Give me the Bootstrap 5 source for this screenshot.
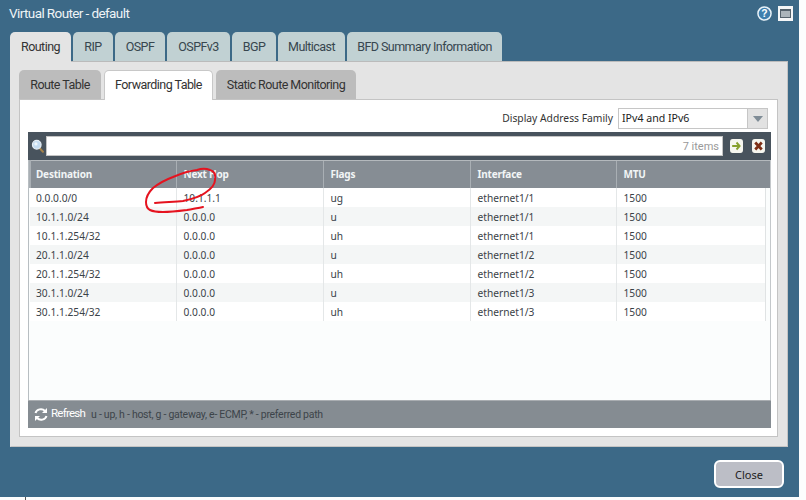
<!DOCTYPE html>
<html lang="en"><head><meta charset="utf-8"><title>Virtual Router</title>
<link href="https://cdn.jsdelivr.net/npm/bootstrap@5.3.0/dist/css/bootstrap.min.css" rel="stylesheet">
<style>
html,body{margin:0;width:806px;height:500px;overflow:hidden;background:#fcfdfd}
.vr-win{position:relative;width:799px;height:497px;background:#3c6987;padding:0 11.5px 0 10px;font-family:Roboto,sans-serif}
.vr-title{height:32px;color:#eef4f6;font-size:13.5px;letter-spacing:-.6px;padding-top:5px;line-height:17px;margin-left:-1px}
.vr-tools{position:absolute;top:6px;right:6px;gap:6px}
.vr-tabs{height:29px;gap:2px;margin:0;padding:0;list-style:none}
.vr-tab{height:29px;background:#c1d1d3;color:#37464f;border-radius:5px 5px 0 0;font-size:12.5px;letter-spacing:-.55px;line-height:29px;text-align:center;flex:none}
.vr-tab.on{background:#e4e4e4;height:31px;color:#333;z-index:1}
.vr-outer{background:#e4e4e4;border:1px solid #c4c4c4;border-top-color:#bbb;border-left-color:#e4e4e4;height:386px;padding:8px 8.5px 9px 8px}
.vr-subtabs{height:29px;gap:3px}
.vr-subtab{height:29px;background:#bcbcbc;color:#333;border-radius:5px 5px 0 0;font-size:12.5px;letter-spacing:-.55px;line-height:29px;text-align:center;flex:none}
.vr-subtab.on{background:#fff;height:30px;z-index:1;border:1px solid #c8c8c8;border-bottom:0;line-height:28px}
.vr-inner{background:#fff;border:1px solid #c4c4c4;height:338px;padding:8px 7px 8px 8px}
.vr-fam{height:21px;margin-bottom:3px;padding-right:2px;color:#333;font-family:"Noto Sans",sans-serif;font-size:10.3px}
.vr-sel{width:150px;height:21px;margin-left:5px;border:1px solid #c6c6c6;display:flex;color:#222;background:#fff;font-size:10.6px}
.vr-sel-text{flex:1;padding-left:3px;line-height:19px}
.vr-sel-arrow{width:20px;background:#e2e2e2;border-left:1px solid #c6c6c6;display:flex;align-items:center;justify-content:center}
.vr-sel-arrow i{display:block;width:0;height:0;border:5px solid transparent;border-top:6px solid #7f8c96;border-bottom:0}
.vr-search{height:28px;background:#48535d;margin-right:-1px;padding:4px 6px 4px 3px}
.vr-box{flex:1;height:20px;margin:0 7px 0 1px;background:#fff;border:1px solid #c4c4c4;text-align:right;color:#999;font-size:11px;line-height:20px;padding-right:3px}
.vr-x{margin-left:9px}
.vr-grid{height:240px;background:#fbfdfd;border-left:1px solid #b8bec2;border-right:1px solid #c4c8cb;margin-right:-1px;overflow:hidden}
.vr-table{width:741px;border-collapse:collapse;table-layout:fixed;font-family:"Noto Sans",sans-serif;font-size:10.2px;color:#3a4248;margin:0}
.vr-table th{height:27px;background:#868d94;color:#f2f5f6;font-weight:700;font-size:10px;letter-spacing:-.2px;padding:1px 0 0 7px;border-left:1px solid #a9afb4;border-top:1px solid #b4b9bd;vertical-align:middle}
.vr-table th:first-child{border-left:2px solid #a9afb4;padding-left:5px}
.vr-table td{height:19px;padding:1px 0 0 7px;border-right:1px solid #e4e7e8;background:#fff;line-height:18px}
.vr-table td:first-child{padding-left:6px}
.vr-table tbody tr:nth-child(even) td{background:#f4f6f6}
.vr-table td:last-child{border-right:0;box-shadow:inset -5px 0 #fbfdfd,inset -6px 0 #e0e3e4}
.vr-foot{height:28px;background:#858c92;margin-right:-1px;border-top:1px solid #a9adb1;padding-left:6px;font-size:10.5px;letter-spacing:-.28px;color:#3d444a}
.vr-refresh{color:#fff;margin:-2px 6px 0 3px;font-size:11.5px;letter-spacing:-.75px}
.vr-legend{margin-top:1px}
.vr-bottom{height:51px;padding-top:13px}
.vr-close{width:70px;height:28px;background:#bcbec6;border:2px solid #fff;border-radius:6px;font-family:"Noto Sans",sans-serif;font-size:11px;color:#222;line-height:25px;text-align:center;margin-right:3.5px;padding:0}
.vr-scribble{position:absolute;left:140px;top:165px;pointer-events:none}
.vr-edge{position:absolute;left:25px;top:497px;width:1px;height:3px;background:#555}
.w1{width:61px}.w2{width:40px}.w3{width:50px}.w4{width:63px}.w5{width:44px}.w6{width:67px}.w7{width:155px}
.s1{width:82px}.s2{width:109px}.s3{width:140px}
</style></head><body>
<div class="vr-win">
 <div class="vr-title">Virtual Router - default</div>
 <div class="vr-tools d-flex align-items-center">
  <svg width="15" height="15" viewBox="0 0 16 16"><circle cx="8" cy="8" r="7" fill="#3f7fae" stroke="#e8f2f8" stroke-width="1.6"/><text x="8" y="12" text-anchor="middle" font-size="11" font-weight="700" font-family="Liberation Sans" fill="#fff">?</text></svg>
  <svg width="15" height="15" viewBox="0 0 15 15"><rect width="15" height="15" fill="#f4f6f7"/><rect x="2.5" y="3.5" width="10" height="8" fill="#aab4ba" stroke="#54626c"/><rect x="2" y="3" width="11" height="2" fill="#54626c"/></svg>
 </div>
 <ul class="vr-tabs d-flex">
  <li class="vr-tab on w1">Routing</li><li class="vr-tab w2">RIP</li><li class="vr-tab w3">OSPF</li><li class="vr-tab w4">OSPFv3</li><li class="vr-tab w5">BGP</li><li class="vr-tab w6">Multicast</li><li class="vr-tab w7">BFD Summary Information</li>
 </ul>
 <div class="vr-outer">
  <div class="vr-subtabs d-flex">
   <div class="vr-subtab s1">Route Table</div><div class="vr-subtab on s2">Forwarding Table</div><div class="vr-subtab s3">Static Route Monitoring</div>
  </div>
  <div class="vr-inner">
   <div class="vr-fam d-flex justify-content-end align-items-center">
    <span>Display Address Family</span>
    <div class="vr-sel"><div class="vr-sel-text">IPv4 and IPv6</div><div class="vr-sel-arrow"><i></i></div></div>
   </div>
   <div class="vr-search d-flex align-items-center">
    <svg width="14" height="14" viewBox="0 0 16 17"><path d="M10 11l4 4.5" stroke="#a5824a" stroke-width="2.4" stroke-linecap="round"/><circle cx="6.5" cy="7" r="5.2" fill="#c4dcf2" stroke="#e6eef6" stroke-width="1.5"/><circle cx="5.5" cy="6" r="2" fill="#eef6fc"/></svg>
    <div class="vr-box">7 items</div>
    <svg width="13" height="14" viewBox="0 0 15 14" preserveAspectRatio="none"><rect width="15" height="14" rx="3" fill="#f6f6ef"/><path d="M2.5 7h8M7.5 3.5L11 7l-3.5 3.5" fill="none" stroke="#87a02d" stroke-width="2.2"/></svg>
    <svg width="13" height="14" viewBox="0 0 14 14" preserveAspectRatio="none" class="vr-x"><rect width="14" height="14" rx="3" fill="#f6f6ef"/><path d="M3.5 3.5l7 7M10.5 3.5l-7 7" stroke="#7e2f16" stroke-width="3"/></svg>
   </div>
   <div class="vr-grid">
    <table class="vr-table">
     <colgroup><col style="width:146px"><col style="width:147px"><col style="width:147px"><col style="width:146px"><col style="width:155px"></colgroup>
     <thead><tr><th>Destination</th><th>Next Hop</th><th>Flags</th><th>Interface</th><th>MTU</th></tr></thead>
     <tbody>
      <tr><td>0.0.0.0/0</td><td>10.1.1.1</td><td>ug</td><td>ethernet1/1</td><td>1500</td></tr>
      <tr><td>10.1.1.0/24</td><td>0.0.0.0</td><td>u</td><td>ethernet1/1</td><td>1500</td></tr>
      <tr><td>10.1.1.254/32</td><td>0.0.0.0</td><td>uh</td><td>ethernet1/1</td><td>1500</td></tr>
      <tr><td>20.1.1.0/24</td><td>0.0.0.0</td><td>u</td><td>ethernet1/2</td><td>1500</td></tr>
      <tr><td>20.1.1.254/32</td><td>0.0.0.0</td><td>uh</td><td>ethernet1/2</td><td>1500</td></tr>
      <tr><td>30.1.1.0/24</td><td>0.0.0.0</td><td>u</td><td>ethernet1/3</td><td>1500</td></tr>
      <tr><td>30.1.1.254/32</td><td>0.0.0.0</td><td>uh</td><td>ethernet1/3</td><td>1500</td></tr>
     </tbody>
    </table>
   </div>
   <div class="vr-foot d-flex align-items-center">
    <svg width="14" height="13" viewBox="0 0 14 13"><path d="M1.5 5A5.5 5 0 0 1 11 3" fill="none" stroke="#fff" stroke-width="2"/><path d="M13 0v5H8z" fill="#fff"/><path d="M12.5 8A5.5 5 0 0 1 3 10" fill="none" stroke="#fff" stroke-width="2"/><path d="M1 13V8h5z" fill="#fff"/></svg>
    <span class="vr-refresh">Refresh</span><span class="vr-legend">u - up, h - host, g - gateway, e- ECMP, * - preferred path</span>
   </div>
  </div>
 </div>
 <div class="vr-bottom d-flex justify-content-end"><button type="button" class="btn vr-close">Close</button></div>
 <svg class="vr-scribble" width="80" height="50" viewBox="0 0 80 50"><path d="M15 38C25 37 35 37 43 36C52 34 60 32 65 28C71 24 75 19 75 15C76 9 74 6 70 5C65 3 60 4 57 5C48 6 40 9 33 12C25 15 18 19 13 23C9 27 6 32 6 37C6 41 8 44 10 45C14 47 18 47 23 47C31 47 39 46 47 45C52 44 58 43 63 42" fill="none" stroke="#e5131f" stroke-width="2" stroke-linecap="round"/></svg>
</div>
<div class="vr-edge"></div>
</body></html>
